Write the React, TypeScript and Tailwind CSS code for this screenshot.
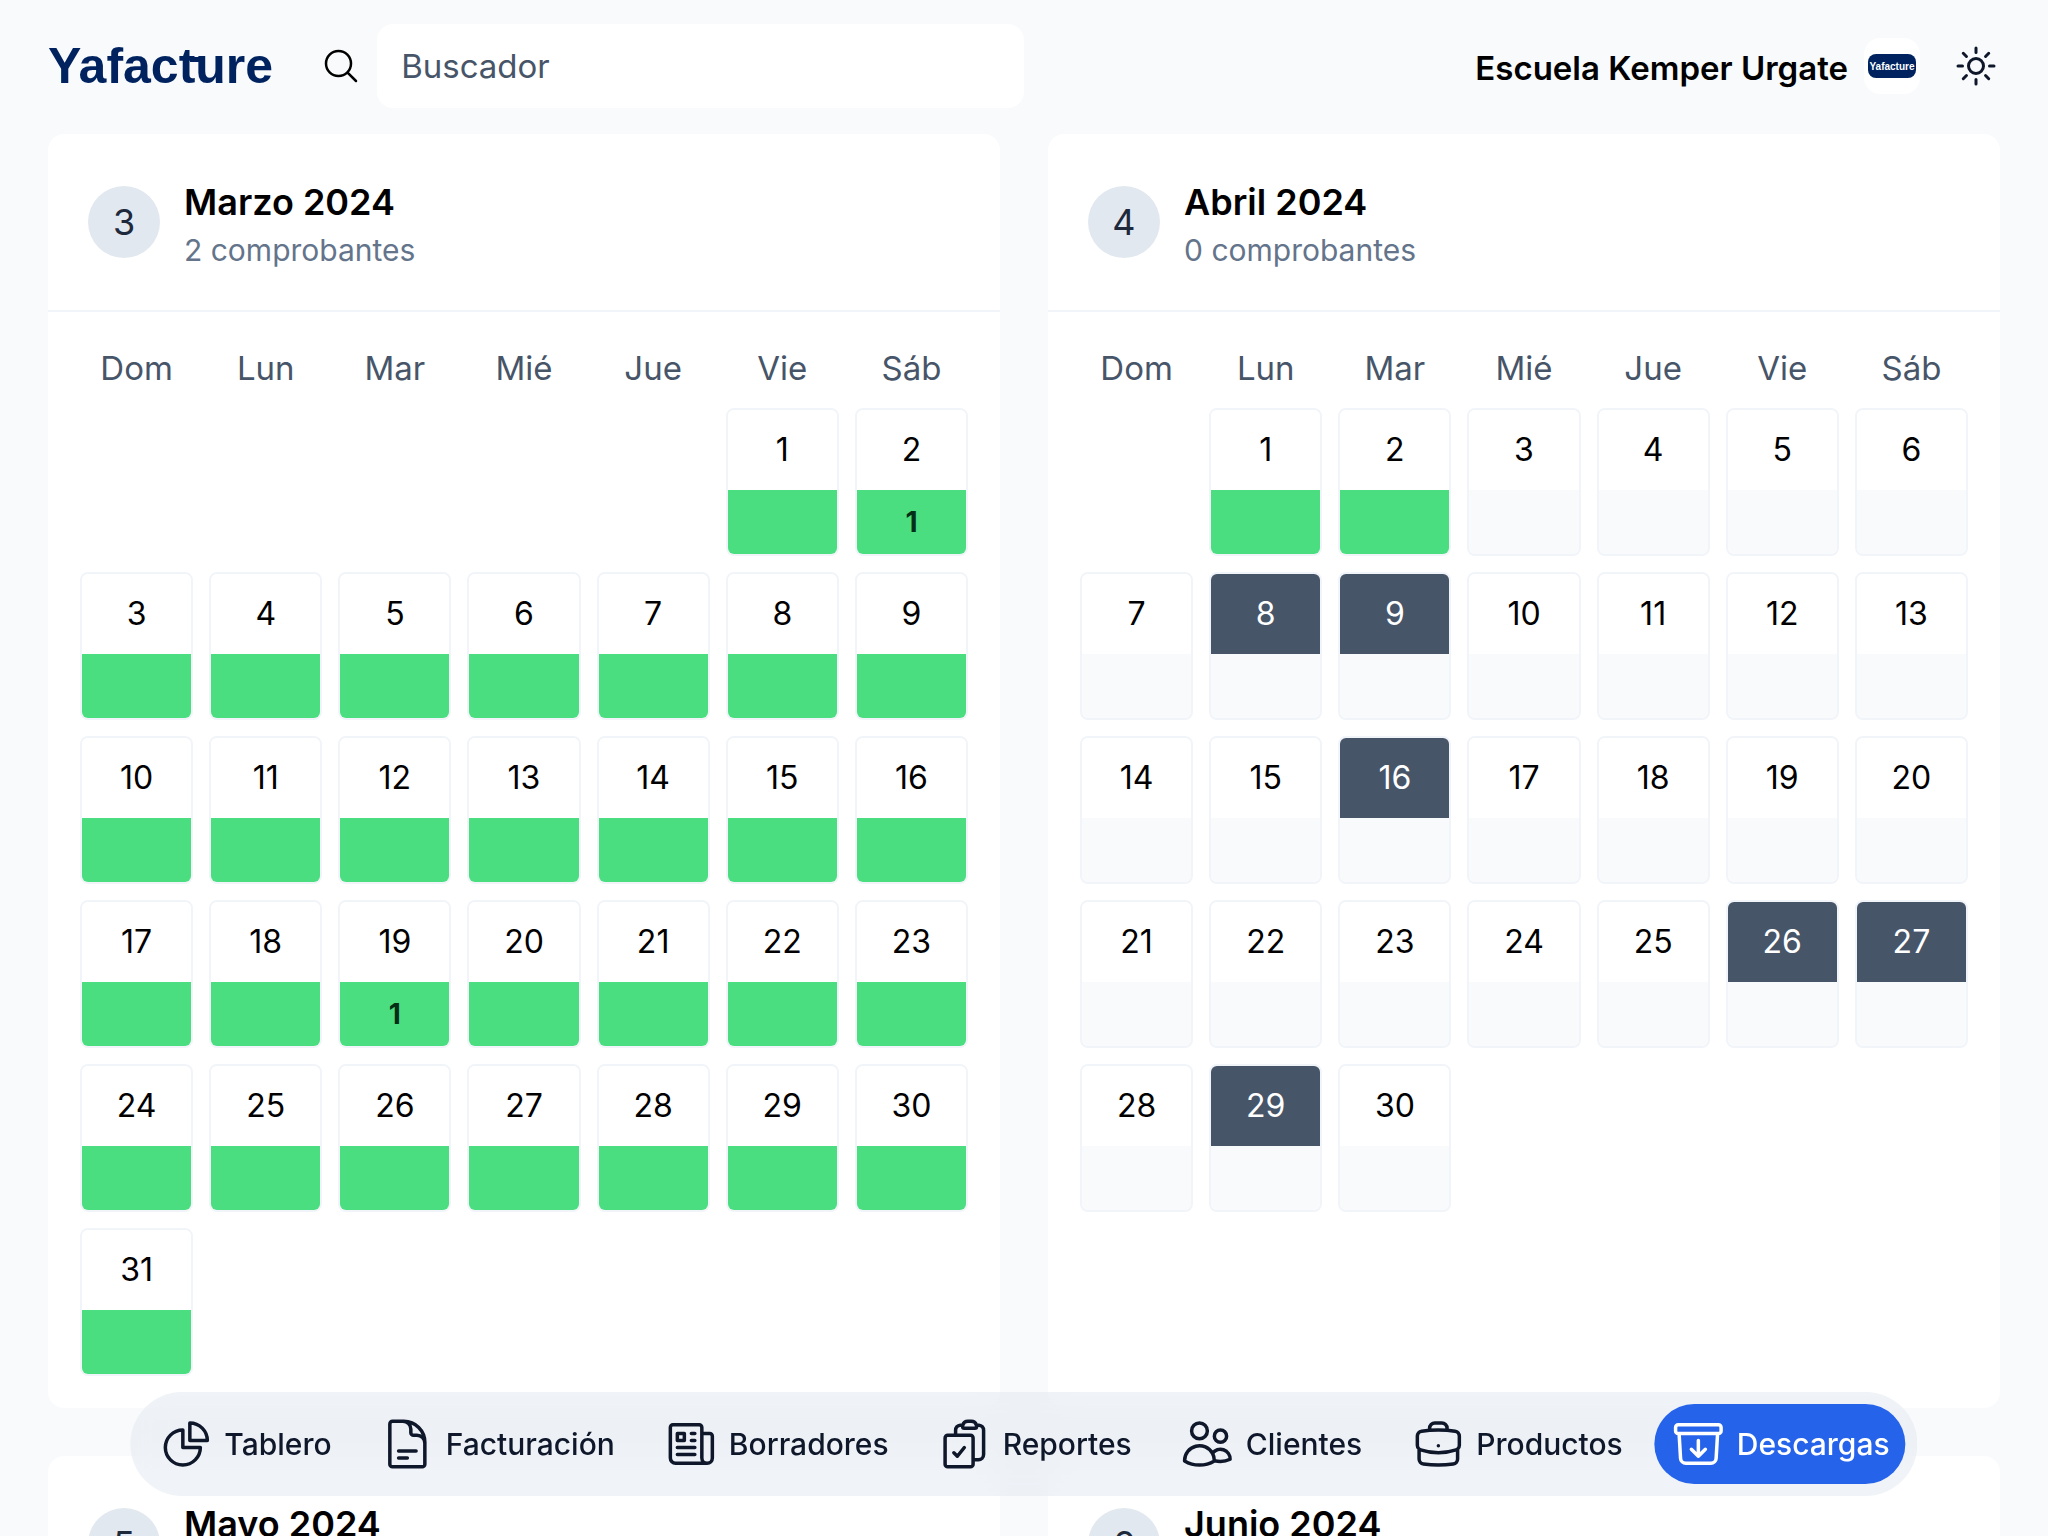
import {
  HiOutlineArchiveBoxArrowDown,
  HiOutlineBriefcase,
  HiOutlineChartPie,
  HiOutlineClipboardDocumentCheck,
  HiOutlineDocumentText,
  HiOutlineMagnifyingGlass,
  HiOutlineNewspaper,
  HiOutlineSun,
  HiOutlineUsers,
} from "react-icons/hi2";

type Month = {
  number: number;
  name: string;
  // weekday of the first day, 0 is Sunday
  start: number;
  days: number;
  // last day that is already downloaded
  doneUntil: number;
  counts: Record<number, number>;
  marked: number[];
};

const WEEKDAYS = ["Dom", "Lun", "Mar", "Mié", "Jue", "Vie", "Sáb"];

const MONTHS: Month[] = [
  { number: 3, name: "Marzo 2024", start: 5, days: 31, doneUntil: 31, counts: { 2: 1, 19: 1 }, marked: [] },
  { number: 4, name: "Abril 2024", start: 1, days: 30, doneUntil: 2, counts: {}, marked: [8, 9, 16, 26, 27, 29] },
  { number: 5, name: "Mayo 2024", start: 3, days: 31, doneUntil: 0, counts: {}, marked: [] },
  { number: 6, name: "Junio 2024", start: 6, days: 30, doneUntil: 0, counts: {}, marked: [] },
];

const NAV = [
  { label: "Tablero", Icon: HiOutlineChartPie },
  { label: "Facturación", Icon: HiOutlineDocumentText },
  { label: "Borradores", Icon: HiOutlineNewspaper },
  { label: "Reportes", Icon: HiOutlineClipboardDocumentCheck },
  { label: "Clientes", Icon: HiOutlineUsers },
  { label: "Productos", Icon: HiOutlineBriefcase },
  { label: "Descargas", Icon: HiOutlineArchiveBoxArrowDown, active: true },
];

const getWeeks = (month: Month) => {
  const weeks: (number | null)[][] = [];
  const total = Math.ceil((month.start + month.days) / 7) * 7;
  for (let i = 0; i < total; i++) {
    if (i % 7 === 0) weeks.push([]);
    const day = i - month.start + 1;
    weeks[weeks.length - 1].push(day > 0 && day <= month.days ? day : null);
  }
  return weeks;
};

const Day = ({ day, month }: { day: number; month: Month }) => {
  const marked = month.marked.includes(day);
  const done = day <= month.doneUntil;
  return (
    <div className="overflow-hidden rounded-lg border-2 border-[#f1f5f9]">
      <div
        className={`flex h-20 items-center justify-center text-[32px] ${
          marked ? "bg-[#475569] text-white" : "bg-white text-black"
        }`}
      >
        {day}
      </div>
      <div
        className={`flex h-16 items-center justify-center text-[28px] font-bold text-[#052e16] ${
          done ? "bg-[#4ade80]" : "bg-[#f8fafc]"
        }`}
      >
        {month.counts[day]}
      </div>
    </div>
  );
};

const MonthCard = ({ month }: { month: Month }) => {
  const total = Object.values(month.counts).reduce((a, b) => a + b, 0);
  return (
    <section className="rounded-2xl bg-white">
      <div className="flex items-center gap-6 border-b-2 border-[#f1f5f9] p-10">
        <div className="flex size-[72px] items-center justify-center rounded-full bg-[#e2e8f0] text-4xl text-[#1e293b]">
          {month.number}
        </div>
        <div>
          <h2 className="text-[36px] leading-[56px] font-semibold text-black">{month.name}</h2>
          <p className="text-[30px] leading-[40px] text-[#64748b]">{total} comprobantes</p>
        </div>
      </div>
      <div className="p-4">
        <table className="w-full table-fixed border-separate border-spacing-4">
          <thead>
            <tr>
              {WEEKDAYS.map((weekday) => (
                <th key={weekday} className="p-0 text-[33px] leading-[48px] font-normal text-[#475569]">
                  {weekday}
                </th>
              ))}
            </tr>
          </thead>
          <tbody>
            {getWeeks(month).map((week, i) => (
              <tr key={i}>
                {week.map((day, j) => (
                  <td key={j} className="p-0">
                    {day && <Day day={day} month={month} />}
                  </td>
                ))}
              </tr>
            ))}
          </tbody>
        </table>
      </div>
    </section>
  );
};

const Logo = () => {
  return (
    <a
      href="#"
      className="relative font-['Liberation_Sans',sans-serif] text-[50px] leading-[60px] font-bold text-[#00235f]"
    >
      Yafacture
      {/* bar that joins the t and the u */}
      <svg viewBox="0 0 224 60" className="absolute top-0 left-0 h-[60px] w-[224px]" aria-hidden="true">
        <rect x="142" y="21" width="9" height="5" fill="#00235f" />
      </svg>
    </a>
  );
};

const Header = () => {
  return (
    <header className="grid grid-cols-2 pt-6 pb-[26px]">
      <div className="flex items-center pl-12">
        <Logo />
        <label htmlFor="search" className="mr-4 ml-12">
          <HiOutlineMagnifyingGlass className="size-10 text-black" />
          <span className="sr-only">Buscador</span>
        </label>
        <input
          id="search"
          type="text"
          placeholder="Buscador"
          className="h-[84px] min-w-0 flex-1 rounded-2xl bg-white px-6 text-[33px] text-black outline-none placeholder:text-[#475569]"
        />
      </div>
      <div className="flex items-center justify-end pr-12">
        <span className="pt-1 text-[33px] leading-[48px] font-semibold text-black">Escuela Kemper Urgate</span>
        <div className="ml-4 flex size-14 items-center justify-center rounded-2xl bg-white">
          <div className="flex h-6 w-12 items-center justify-center rounded-lg bg-[#00235f] font-['Liberation_Sans',sans-serif] text-[10px] font-bold text-white">
            Yafacture
          </div>
        </div>
        <button type="button" aria-label="Cambiar tema" className="ml-8 text-[#0f172a]">
          <HiOutlineSun className="size-12" />
        </button>
      </div>
    </header>
  );
};

const BottomNav = () => {
  return (
    <nav className="fixed bottom-10 left-1/2 flex -translate-x-1/2 gap-4 rounded-full bg-[#e2e8f0]/50 p-3 backdrop-blur-lg">
      {NAV.map(({ label, Icon, active }) => (
        <a
          key={label}
          href="#"
          className={`flex h-20 items-center gap-2.5 rounded-full px-4 text-[30px] font-medium whitespace-nowrap ${
            active ? "bg-[#2563eb] text-white" : "text-[#0f172a]"
          }`}
        >
          <Icon className="size-14" />
          {label}
        </a>
      ))}
    </nav>
  );
};

export default function App() {
  return (
    <div className="flex h-screen flex-col bg-[#f8fafc] font-['Inter',sans-serif]">
      <Header />
      <main className="grid flex-1 grid-cols-2 gap-12 overflow-y-auto px-12 [scrollbar-width:none]">
        {MONTHS.map((month) => (
          <MonthCard key={month.number} month={month} />
        ))}
      </main>
      <BottomNav />
    </div>
  );
}
